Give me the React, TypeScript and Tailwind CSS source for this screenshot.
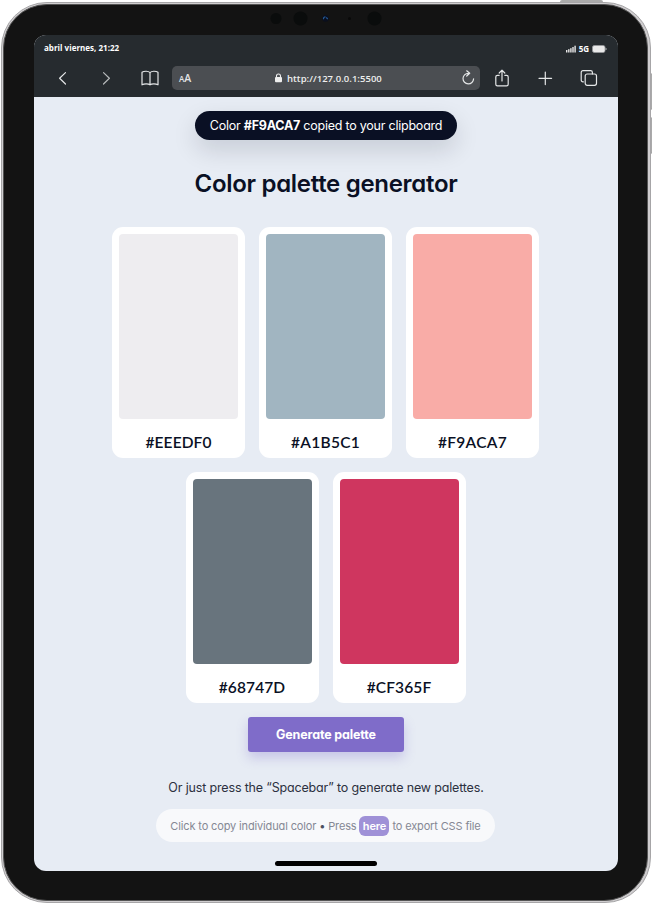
import React from "react";

const body = "font-['Inter','Lato',sans-serif] [font-feature-settings:'cv11']";
const system = "font-['Open_Sans','Noto_Sans',sans-serif]";

function Swatch({ color, hex, tracking }: { color: string; hex: string; tracking: string }) {
  return (
    <div className="flex h-[231px] w-[133px] flex-col rounded-[11px] bg-white p-[7px]">
      <div className={`h-[185px] w-full shrink-0 rounded-[4px] ${color}`} />
      <div className={`flex h-[46px] shrink-0 items-center justify-center whitespace-nowrap pt-[2px] font-['Lato',sans-serif] text-[15.5px] font-semibold text-[#0a1024] ${tracking}`}>
        {hex}
      </div>
    </div>
  );
}

function Icon({ children, className, w = 20 }: { children: React.ReactNode; className?: string; w?: number }) {
  return (
    <svg width={w} height="20" viewBox={`0 0 ${w} 20`} fill="none" stroke="#e4e6e7" strokeWidth="1.2" strokeLinecap="round" strokeLinejoin="round" className={`shrink-0 ${className ?? ""}`}>
      {children}
    </svg>
  );
}

function Browser() {
  return (
    <header className={`h-[62px] shrink-0 bg-[#262b2f] text-white ${system}`}>
      <div className="flex h-[26px] items-center justify-between pr-[11px] pl-[10px]">
        <span className="whitespace-nowrap text-[8px] leading-none font-bold tracking-[0.02px]">abril viernes, 21:22</span>
        <div className="flex items-center gap-[3px] pt-[2px]">
          <svg width="10" height="8" viewBox="0 0 10 8" fill="#e8e8e8">
            <rect y="5" width="1.4" height="2.5" />
            <rect x="2.1" y="4.2" width="1.4" height="3.3" />
            <rect x="4.2" y="3.2" width="1.4" height="4.3" />
            <rect x="6.3" y="2" width="1.4" height="5.5" />
            <rect x="8.4" y="0.7" width="1.4" height="6.8" />
          </svg>
          <span className="text-[8px] leading-none font-bold">5G</span>
          <svg width="15" height="8" viewBox="0 0 15 8">
            <rect x="0.5" y="0.5" width="12.5" height="7" rx="1.8" fill="#e9e9e9" stroke="#94979a" strokeWidth="0.8" />
            <path d="M14 3v2" stroke="#b0b2b4" />
          </svg>
        </div>
      </div>
      <div className="mt-px flex h-[32px] items-center">
        <Icon className="ml-[18px]"><path d="M13.5 4.6 7.6 10.3l5.9 5.7" /></Icon>
        <Icon className="ml-[24px]"><path d="m7.5 4.6 5.9 5.7L7.5 16" stroke="#b5b8ba" /></Icon>
        <Icon className="ml-[24px]">
          <path d="M10 4.6C8.4 2.9 4.2 2.8 2 4.3v12.5c2.4-1.4 6.3-1.3 8 0 1.7-1.3 5.6-1.4 8 0V4.3c-2.2-1.5-6.4-1.4-8 .3Zm0 0v12.2" />
        </Icon>
        <div className="ml-[12px] flex h-[24px] w-[308px] shrink-0 items-center rounded-[5px] bg-[#4b4e52] pr-[3px] pl-[7px]">
          <div className="flex w-[96px] items-baseline pt-px leading-none text-[#e4e4e5]">
            <span className="text-[8px] font-semibold">A</span>
            <span className="text-[10.5px] font-semibold">A</span>
          </div>
          <svg width="7" height="10" viewBox="0 0 7 10" className="mr-[5px]">
            <rect x="0" y="4" width="7" height="5.2" rx="1" fill="#eee" />
            <path d="M1.5 4.5V3a2 2 0 0 1 4 0v1.5" fill="none" stroke="#eee" strokeWidth="1.1" />
          </svg>
          <span className="whitespace-nowrap pt-px text-[9.5px] leading-none font-semibold tracking-[0.03px] text-[#eee]">http://127.0.0.1:5500</span>
          <Icon className="ml-auto -mr-px">
            <path d="M10.7 5.3h-.4a5.3 5.3 0 1 0 5.3 5.5M8.7 2.8l3 2.5-3 2.7" />
          </Icon>
        </div>
        <Icon className="ml-[12px]">
          <path d="M7.2 7.3H5.4c-1 0-1.6.6-1.6 1.6v7.3c0 1 .6 1.6 1.6 1.6h9.2c1 0 1.6-.6 1.6-1.6V8.9c0-1-.6-1.6-1.6-1.6h-1.8M10 13V2.3M7.2 5 10 2.2 12.8 5" />
        </Icon>
        <Icon className="ml-[23px]"><path d="M4 10.3h12.6M10.3 4v12.6" /></Icon>
        <Icon className="ml-[24px]">
          <rect x="6.2" y="6" width="11.3" height="11.3" rx="2" />
          <path d="M4.4 13.8H4c-1.1 0-1.8-.7-1.8-1.8V4.4c0-1.1.7-1.8 1.8-1.8h7.6c1.1 0 1.8.7 1.8 1.8V6" />
        </Icon>
      </div>
    </header>
  );
}

function Camera() {
  return (
    <svg width="120" height="20" viewBox="0 0 120 20" className="absolute top-[5px] left-[264px]">
      <circle cx="10" cy="10.5" r="5.5" fill="#0a0c0c" />
      <circle cx="34.5" cy="10.5" r="7" fill="#0a0c0c" />
      <circle cx="59.5" cy="10.5" r="3.2" fill="#0a0f1e" />
      <path d="M57.5 11.2v-.4a2 2 0 0 1 2-2M60.3 9.3l1.4 1.9" fill="none" stroke="#235894" strokeWidth="1.2" />
      <circle cx="83.5" cy="10.5" r="1.5" fill="#090909" />
      <circle cx="108.5" cy="10.5" r="7" fill="#0a0c0c" />
    </svg>
  );
}

export default function App() {
  return (
    <div className="relative h-[903px] w-[652px] overflow-hidden bg-white">
      <div className="absolute top-0 left-[560px] h-[4px] w-[43px] rounded-t-[2px] bg-[#aaa]" />
      <div className="absolute top-[73px] left-[649px] h-[37px] w-[3px] rounded-r-[2px] border-y border-[#777] bg-[#aaa]" />
      <div className="absolute top-[117px] left-[649px] h-[37px] w-[3px] rounded-r-[2px] border-y border-[#777] bg-[#aaa]" />
      <div className="relative mt-[2px] ml-px h-[901px] w-[650px] rounded-[46px] border border-[#a6a5a7] bg-[#cfcdcf] p-px pr-[2px]">
        <div className="h-full w-full rounded-[44px] border border-[#555] bg-[#131313] pt-[30px] pl-[30px]">
          <div className="flex h-[836px] w-[584px] flex-col overflow-hidden rounded-[12px] bg-[#e7ecf4]">
            <Browser />
            <main className={`flex grow flex-col items-center pt-[14px] text-[#0a1024] ${body}`}>
              <div className="flex h-[29px] w-[262px] shrink-0 items-center justify-center rounded-full bg-[#0a1024] pt-px text-[12.5px] tracking-[-0.23px] whitespace-pre text-white shadow-[0_10px_24px_rgba(10,16,36,0.14)]">
                Color <b>#F9ACA7</b> copied to your clipboard
              </div>
              <h1 className="mt-[26px] h-[36px] text-[24px] leading-[36px] font-semibold tracking-[-0.3px] whitespace-nowrap">Color palette generator</h1>
              <section className="mt-[25px] flex w-[440px] shrink-0 flex-wrap justify-center gap-[14px] pr-px">
                <Swatch color="bg-[#eeedf0]" hex="#EEEDF0" tracking="tracking-[0.1px]" />
                <Swatch color="bg-[#a1b5c1]" hex="#A1B5C1" tracking="tracking-[0.3px]" />
                <Swatch color="bg-[#f9aca7]" hex="#F9ACA7" tracking="tracking-[0.3px]" />
                <Swatch color="bg-[#68747d]" hex="#68747D" tracking="tracking-[0.1px]" />
                <Swatch color="bg-[#cf365f]" hex="#CF365F" tracking="tracking-[0.1px]" />
              </section>
              <button className="mt-[14px] h-[35px] w-[156px] shrink-0 rounded-[3px] bg-[#7f6cc9] pt-px text-[12.5px] leading-none font-bold tracking-[-0.15px] whitespace-nowrap text-white shadow-[0_6px_12px_rgba(127,108,201,0.3)]">
                Generate palette
              </button>
              <p className="mt-[26px] h-[20px] text-[12.5px] leading-[20px] tracking-[-0.16px] whitespace-nowrap text-[#2c3140]">
                Or just press the “Spacebar” to generate new palettes.
              </p>
              <div className="mt-[11px] mr-px flex h-[33px] w-[339px] shrink-0 items-center justify-center rounded-full bg-[#f8f9fb] pt-px text-[11px] tracking-[-0.14px] whitespace-pre text-[#858894]">
                <span>Click to copy individual color <span className="text-[#4c5060]">•</span> Press </span>
                <span className="flex h-[20px] w-[30px] items-center justify-center rounded-[6px] bg-[#9f91d7] font-semibold text-white">here</span>
                <span> to export CSS file</span>
              </div>
              <div className="mt-[19px] h-[5px] w-[102px] shrink-0 rounded-full bg-black" />
            </main>
          </div>
        </div>
        <Camera />
      </div>
    </div>
  );
}
